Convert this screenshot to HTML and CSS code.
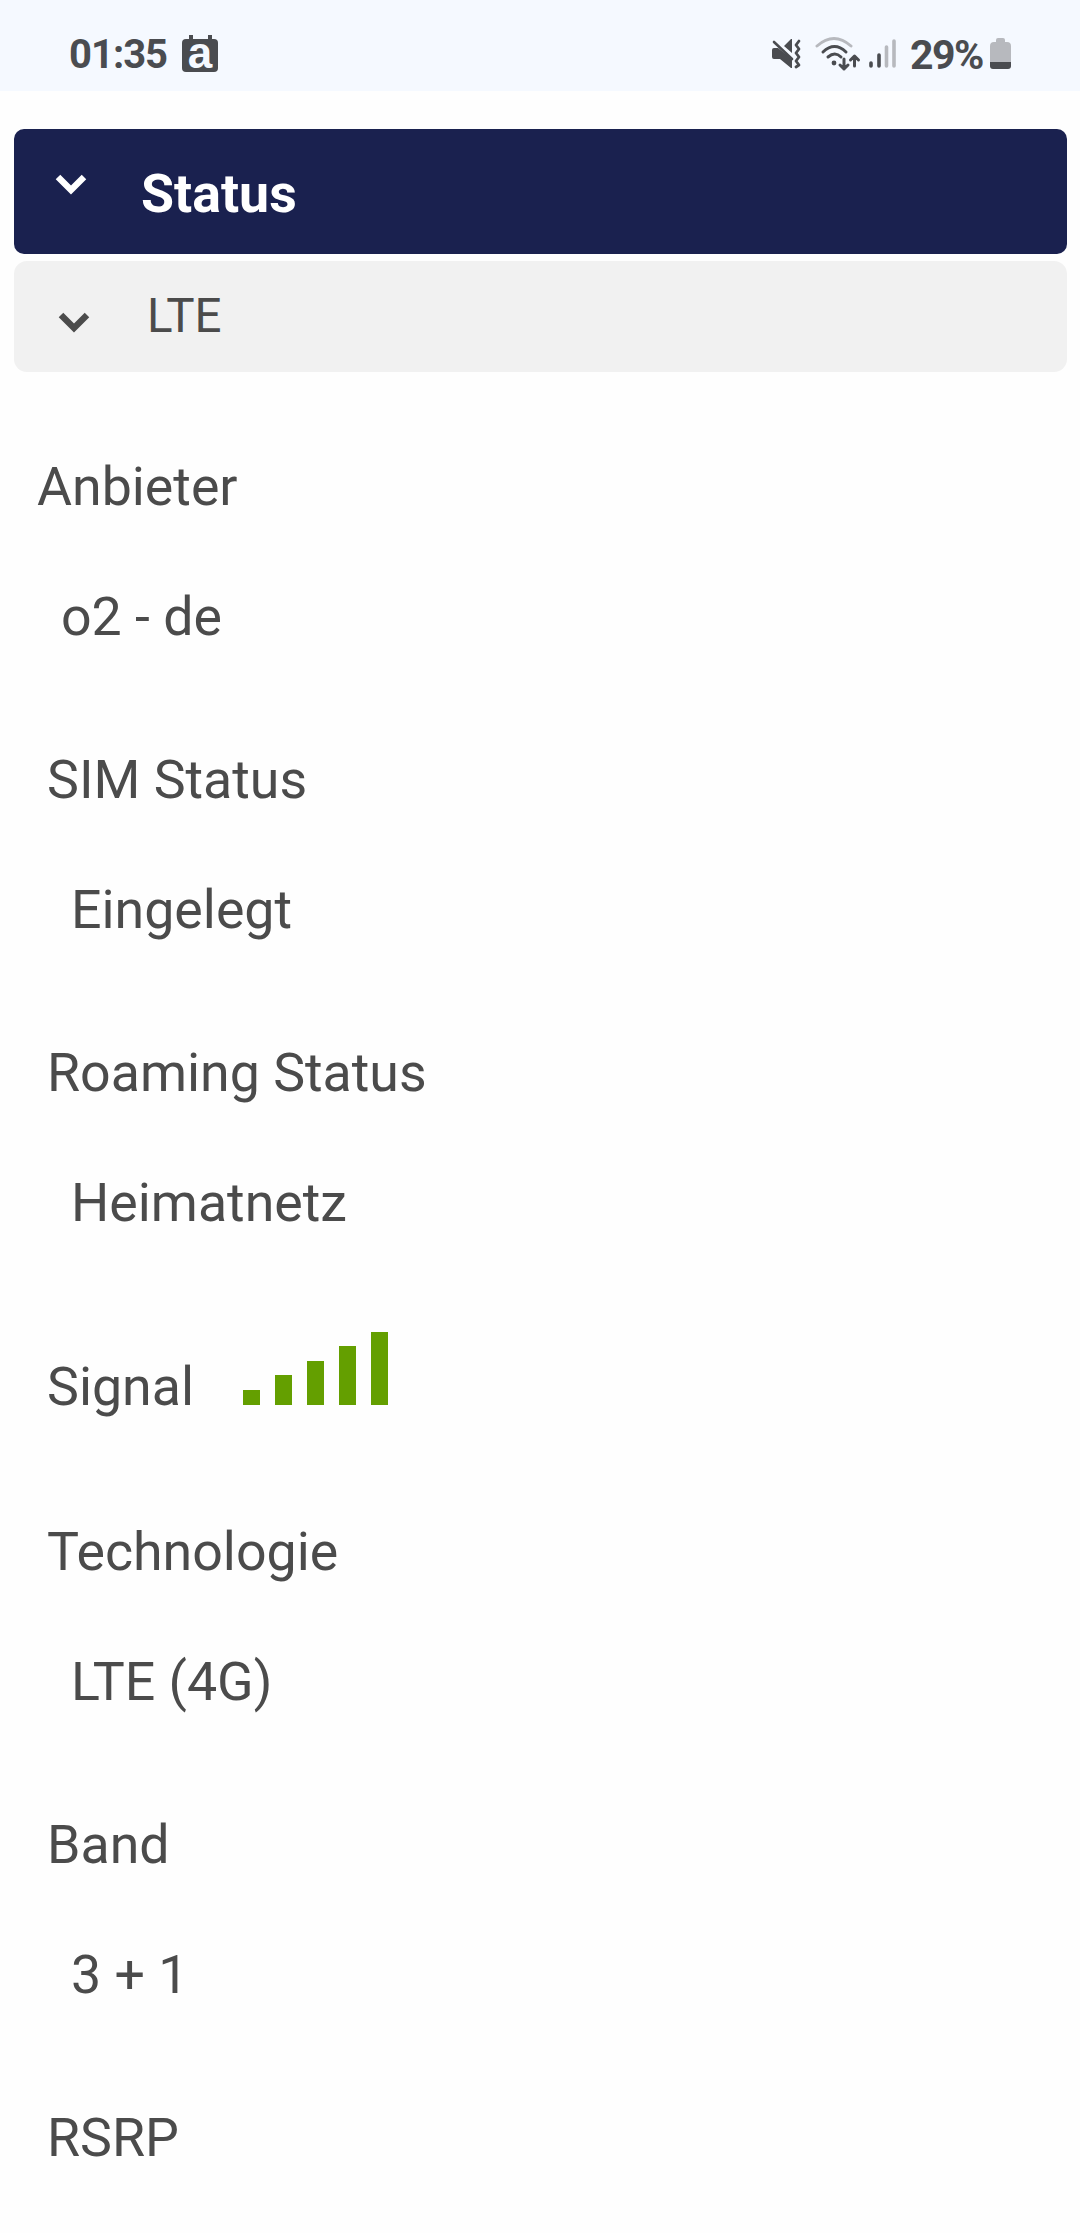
FILE: index.html
```html
<!DOCTYPE html>
<html lang="de">
<head>
    <meta charset="UTF-8">
    <meta name="viewport" content="width=device-width, initial-scale=1.0">
    <title>Status</title>
    <link rel="stylesheet" href="styles.css">
</head>
<body>
    <div class="statusbar">
        <span class="time">01:35</span>
        <div class="app-icon">a</div>
        <svg class="icon-mute" width="32" height="32" viewBox="0 0 32 32">
            <path d="M1 11q0-2 2-2h4l14 11v9h-1L9 20H3q-2 0-2-2z M13 7l7-7h1v14z" fill="#4a4c50"/>
            <path d="M3 3l18 17" stroke="#4a4c50" stroke-width="2.6" stroke-linecap="round"/>
            <path d="M28 2l-3 4 3 4-3 4 3 4-3 4 3 4-3 2" fill="none" stroke="#4a4c50" stroke-width="2.8" stroke-linecap="round" stroke-linejoin="round"/>
        </svg>
        <svg class="icon-wifi" width="46" height="36" viewBox="0 0 46 36">
            <g fill="none" stroke="#4a4c50" stroke-width="3" stroke-linecap="round" stroke-linejoin="round">
                <path d="M2 10q17-15 34 0" stroke="#b7b9be"/>
                <path d="M8 16q11.500-11 23 0M13 21q7-6 13 0"/>
                <path d="M29 23v10M25 29l4 4 4-4M39.500 30V20M35.500 24l4-4 4 4"/>
            </g>
            <circle cx="19" cy="27" r="2.4" fill="#4a4c50"/>
        </svg>
        <svg class="icon-cell" width="28" height="32" viewBox="0 0 28 32">
            <g stroke-width="3.6" stroke-linecap="round">
                <path d="M2 25v3M10 17v11" stroke="#4a4c50"/>
                <path d="M17.500 9v19M25 3v25" stroke="#b7b9be"/>
            </g>
        </svg>
        <span class="percent">29%</span>
        <svg class="icon-battery" width="21" height="32" viewBox="0 0 21 32">
            <path d="M6 4V2q0-2 2-2h5q2 0 2 2v2h2q4 0 4 4v16H0V8q0-4 4-4z" fill="#b7b9be"/>
            <path d="M0 24h21v4q0 3-3 3H3q-3 0-3-3z" fill="#4a4c50"/>
        </svg>
    </div>

    <div class="container">
        <div class="header">
            <svg class="chevron" width="32" height="21" viewBox="0 0 32 21">
                <path d="M3 3l13 13L29 3" fill="none" stroke="currentColor" stroke-width="6.4"/>
            </svg>
            <span class="header-title">Status</span>
        </div>
        <div class="subheader">
            <svg class="chevron" width="32" height="21" viewBox="0 0 32 21">
                <path d="M3 3l13 13L29 3" fill="none" stroke="currentColor" stroke-width="6.4"/>
            </svg>
            <span class="subheader-title">LTE</span>
        </div>

        <div class="details">
            <div class="row first">
                <div class="label">Anbieter</div>
                <div class="value">o2 - de</div>
            </div>
            <div class="row">
                <div class="label">SIM Status</div>
                <div class="value">Eingelegt</div>
            </div>
            <div class="row">
                <div class="label">Roaming Status</div>
                <div class="value">Heimatnetz</div>
            </div>
            <div class="row signal">
                <div class="label">Signal</div>
                <div class="bars">
                    <div class="bar" style="height: 15px"></div>
                    <div class="bar" style="height: 30px"></div>
                    <div class="bar" style="height: 44px"></div>
                    <div class="bar" style="height: 59px"></div>
                    <div class="bar" style="height: 73px"></div>
                </div>
            </div>
            <div class="row">
                <div class="label">Technologie</div>
                <div class="value">LTE (4G)</div>
            </div>
            <div class="row">
                <div class="label">Band</div>
                <div class="value">3 + 1</div>
            </div>
            <div class="row">
                <div class="label">RSRP</div>
            </div>
        </div>
    </div>
</body>
</html>
```
FILE: styles.css
```css
body {
    font-family: Roboto, sans-serif;
    margin: 0;
    background-color: #fefefe;
    color: #4b4b4b;
    height: 2233px;
    overflow: hidden;
}
.statusbar {
    display: flex;
    align-items: flex-start;
    height: 91px;
    padding-left: 69px;
    background-color: #f5f9ff;
    color: #4a4c50;
    font-weight: 700;
    box-sizing: border-box;
}
.time {
    width: 113px;
    margin-top: 31px;
    font-size: 40px;
    line-height: 47px;
    letter-spacing: -1px;
}
.app-icon {
    position: relative;
    width: 36px;
    height: 33px;
    margin-top: 39px;
    border-radius: 4px;
    background-color: #4a4c50;
    color: #f5f9ff;
    font-family: "Liberation Sans", Arial, sans-serif;
    font-size: 44px;
    line-height: 28px;
    text-align: center;
}
/* calendar rings */
.app-icon::before,
.app-icon::after {
    content: "";
    position: absolute;
    top: -4px;
    left: 7px;
    width: 4px;
    height: 6px;
    background-color: #4a4c50;
}
.app-icon::after {
    left: 26px;
}
.icon-mute {
    margin: 39px 0 0 553px;
}
.icon-wifi {
    margin: 36px 0 0 12px;
}
.icon-cell {
    margin: 38px 0 0 8px;
}
.percent {
    width: 80px;
    margin: 31px 0 0 13px;
    font-size: 41px;
    line-height: 48px;
    letter-spacing: -1.5px;
    white-space: nowrap;
}
.icon-battery {
    margin-top: 38px;
}
.container {
    padding: 38px 13px 0 14px;
}
.header, .subheader {
    display: flex;
    align-items: flex-start;
    box-sizing: border-box;
}
.header {
    height: 125px;
    padding-left: 41px;
    border-radius: 10px;
    background-color: #1a214f;
    color: #fff;
}
.header .chevron {
    margin-top: 45px;
}
.header-title {
    margin: 29px 0 0 54px;
    font-size: 53.7px;
    font-weight: 700;
    line-height: 72px;
}
.subheader {
    height: 111px;
    margin-top: 7px;
    padding-left: 44px;
    border-radius: 13px;
    background-color: #f1f1f1;
}
.subheader .chevron {
    margin-top: 51px;
}
.subheader-title {
    margin: 20px 0 0 57px;
    font-size: 47.5px;
    line-height: 70px;
}
.details {
    padding: 79px 0 0 33px;
    font-size: 53.7px;
    line-height: 72px;
}
.row {
    margin-bottom: 91px;
}
.first {
    margin-left: -10px;
}
.value {
    margin: 58px 0 0 24px;
}
.signal {
    display: flex;
    align-items: flex-end;
    margin: 93px 0;
}
.bars {
    display: flex;
    align-items: flex-end;
    gap: 15px;
    margin: 0 0 18px 49px;
}
.bar {
    width: 17px;
    background-color: #649f00;
}
```
